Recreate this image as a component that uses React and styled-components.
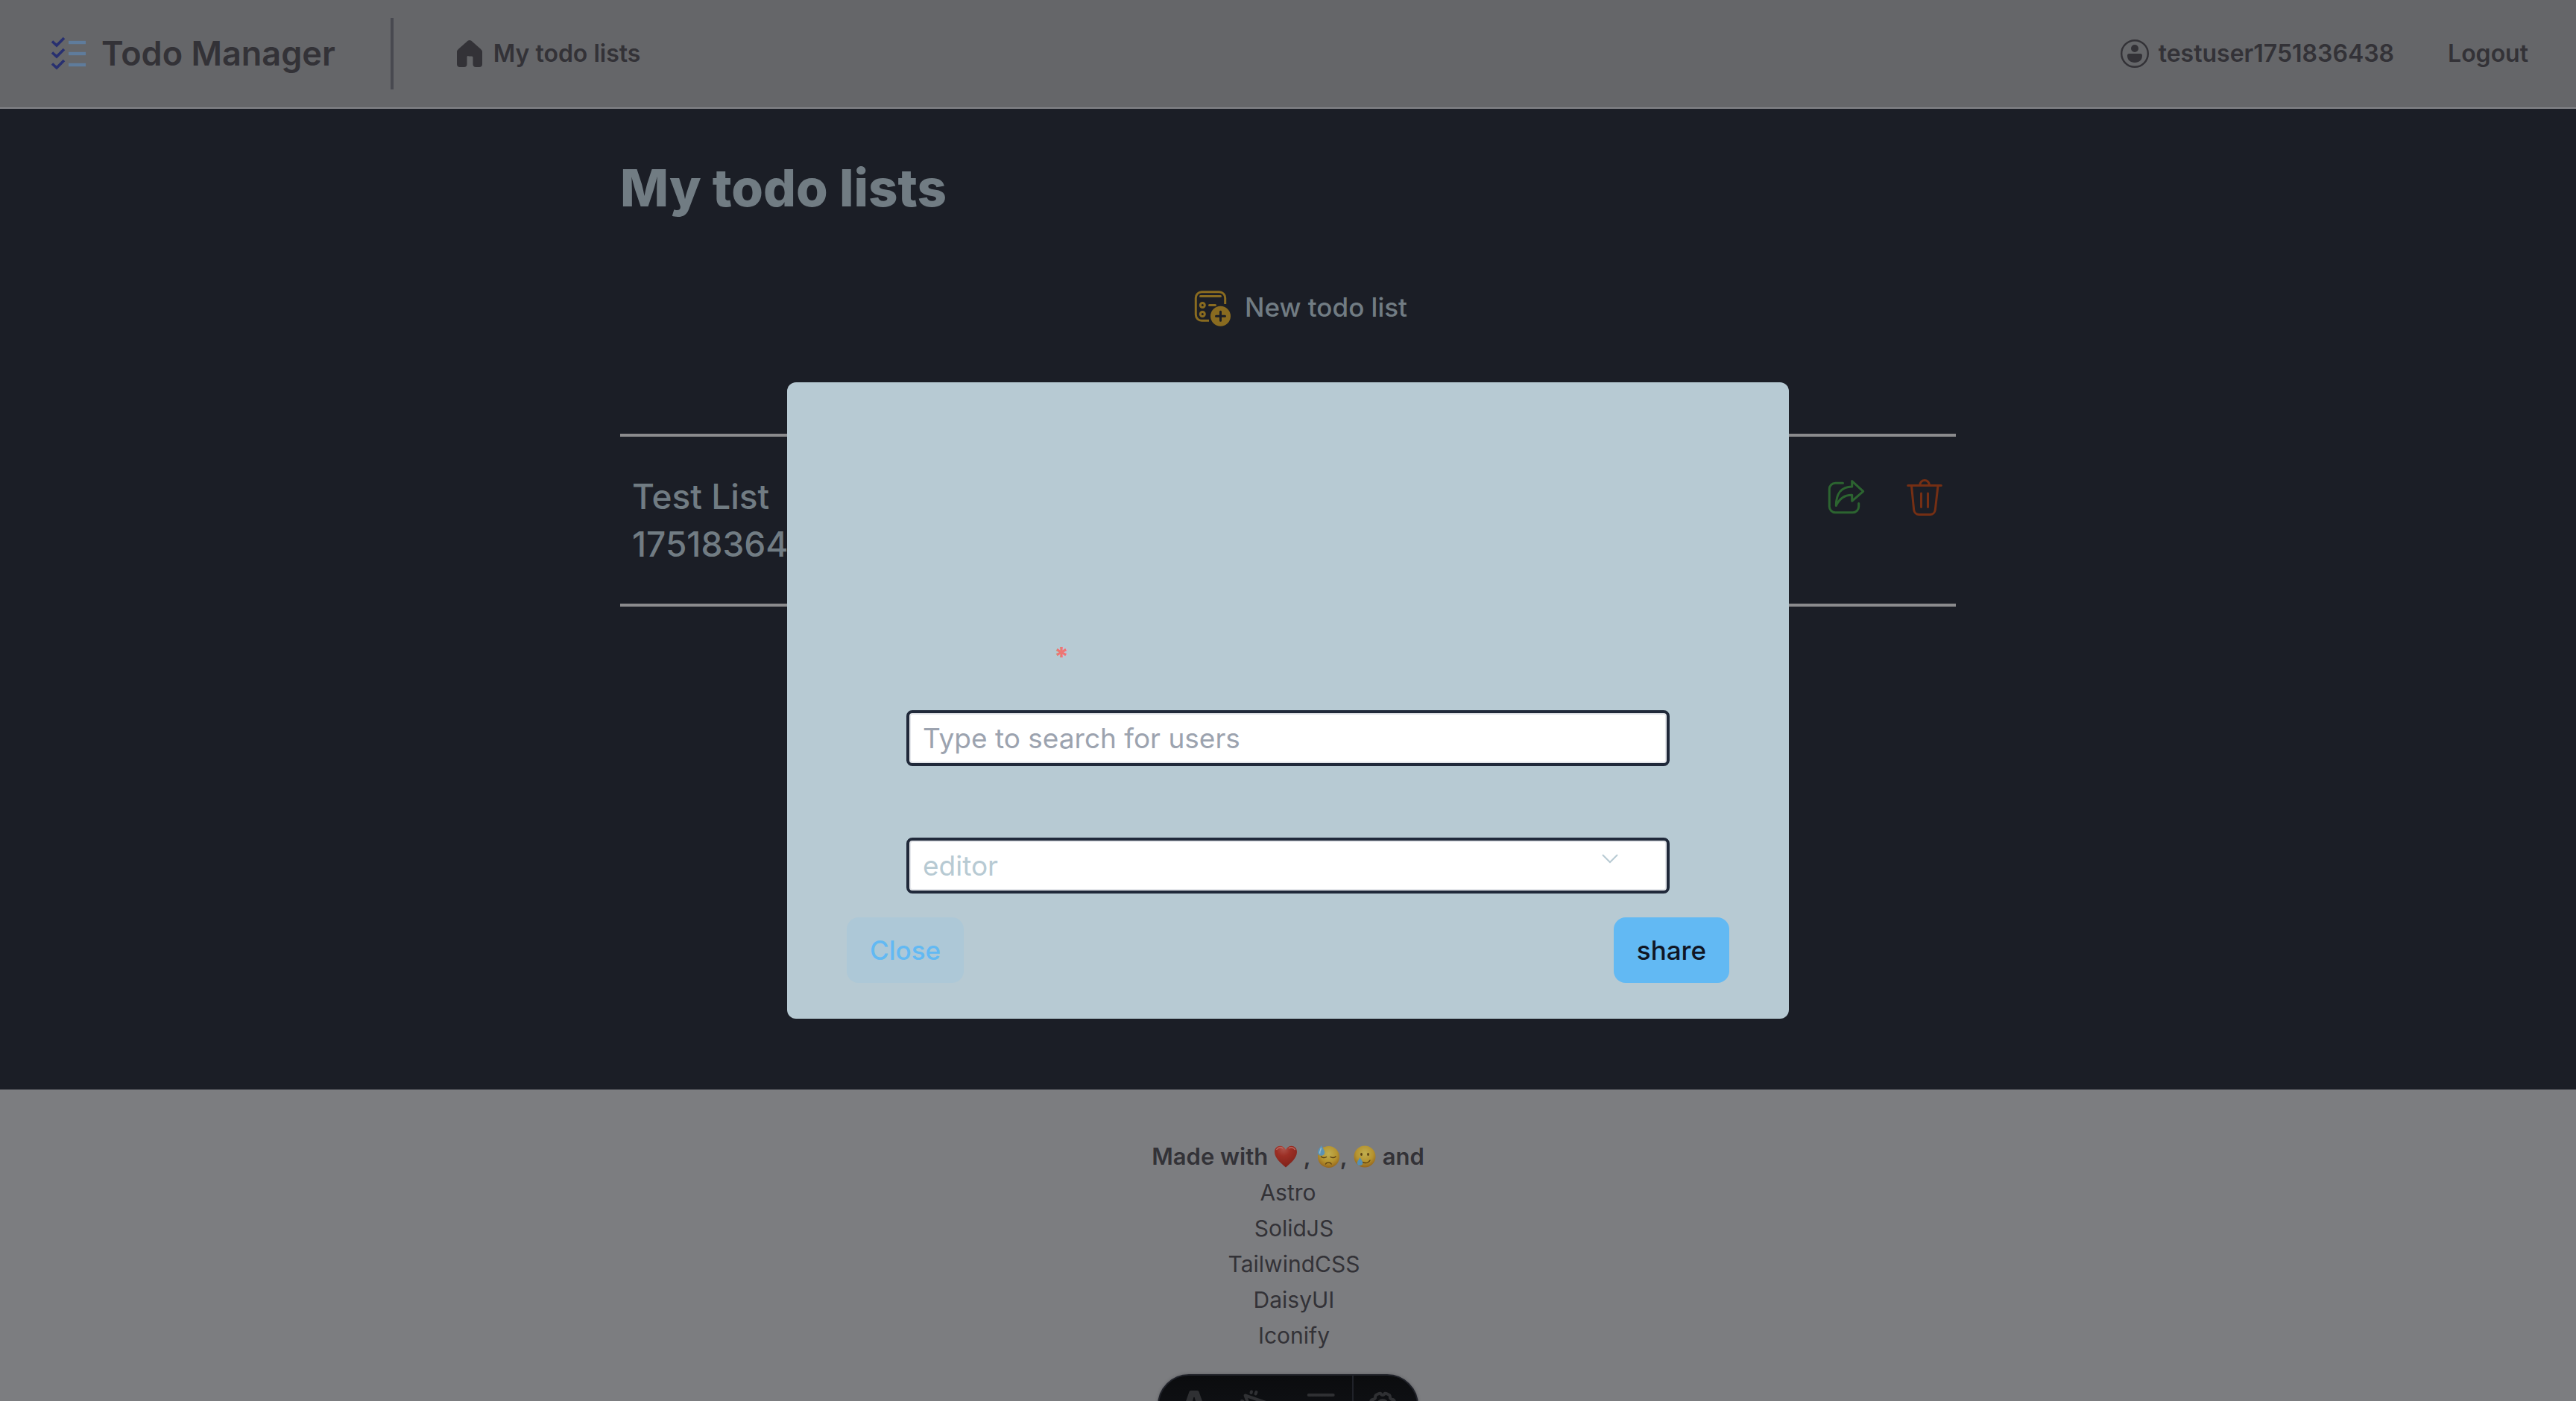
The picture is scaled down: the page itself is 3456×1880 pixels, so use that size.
import React from "react";
import styled, { createGlobalStyle } from "styled-components";

const GlobalStyle = createGlobalStyle`
  *, *::before, *::after { box-sizing: border-box; }
  html { background: #1b1e26; }
  body {
    margin: 0;
    overflow: hidden;
    font-family: Inter, "Liberation Sans", sans-serif;
    font-size: 32px;
    line-height: 48px;
    color: #333237;
  }
  h1, h2, p, ul { margin: 0; padding: 0; }
  ul { list-style: none; }
  a { color: inherit; text-decoration: none; }
  button { font: inherit; color: inherit; background: none; border: 0; padding: 0; cursor: pointer; }
  svg { display: block; flex: none; }
`;

/* ---------- header ---------- */

const Header = styled.header`
  display: flex;
  align-items: center;
  height: 146px;
  padding: 0 64px 0 68px;
  background: #656669;
  border-bottom: 2px solid #828387;
`;

const Brand = styled.a`
  display: flex;
  align-items: center;
  gap: 18px;
  font-size: 45px;
  line-height: 64px;
  font-weight: 600;
`;

const Divider = styled.span`
  width: 4px;
  height: 96px;
  margin: 0 84px 0 74px;
  background: #484950;
`;

const NavLink = styled.a`
  display: flex;
  align-items: center;
  gap: ${(p) => p.$gap || 12}px;
  font-weight: 600;
`;

const Account = styled.nav`
  display: flex;
  align-items: center;
  gap: 72px;
  margin-left: auto;
`;

const LogoutButton = styled.button`
  font-weight: 600;
`;

/* ---------- lists ---------- */

const Main = styled.main`
  min-height: 70vh;
  padding: 66px 64px;
  background: #1b1e26;
  color: #717c83;
`;

const Content = styled.div`
  display: flex;
  flex-direction: column;
  max-width: 1792px;
  margin: 0 auto;
`;

const Title = styled.h1`
  font-size: 69px;
  line-height: 80px;
  font-weight: 800;
`;

const NewListButton = styled.button`
  display: flex;
  align-items: center;
  align-self: center;
  gap: 16px;
  height: 88px;
  margin: 76px 0 126px;
  padding-left: 34px;
  font-size: 35px;
  font-weight: 500;
`;

const Lists = styled.ul`
  border-top: 4px solid #8b8b8d;
`;

const ListRow = styled.li`
  display: flex;
  justify-content: space-between;
  align-items: flex-start;
  padding: 48px 16px;
  border-bottom: 4px solid #8b8b8d;
`;

const ListName = styled.a`
  max-width: 360px;
  font-size: 46px;
  line-height: 64px;
  font-weight: 500;
`;

const RowActions = styled.div`
  display: flex;
  gap: 53px;
`;

const IconButton = styled.button`
  display: flex;
  align-items: center;
  height: 64px;
`;

/* ---------- footer ---------- */

const Footer = styled.footer`
  display: flex;
  flex-direction: column;
  align-items: center;
  min-height: calc(30vh - 146px);
  padding: 66px 64px 64px;
  background: #7c7d80;
`;

const MadeWith = styled.p`
  display: flex;
  align-items: center;
  font-size: 31px;
  font-weight: 600;
  white-space: pre;
`;

const Credits = styled.ul`
  font-size: 30px;
  text-align: center;
`;

const Credit = styled.li`
  & + & { padding-left: 16px; }
`;

/* ---------- floating toolbar ---------- */

const DevToolbar = styled.div`
  position: fixed;
  left: 50%;
  bottom: -48px;
  transform: translateX(-50%);
  display: flex;
  width: 350px;
  height: 84px;
  padding-left: 4px;
  border: 2px solid #202229;
  border-radius: 42px;
  background: linear-gradient(#0b0c0e, #121419);
  box-shadow: 0 0 4px rgba(0, 0, 0, 0.25);
`;

const ToolButton = styled.button`
  display: grid;
  place-items: center;
  width: ${(p) => p.$width || 85}px;
`;

const ToolDivider = styled.span`
  width: 2px;
  background: #202229;
`;

/* ---------- share dialog ---------- */

const Overlay = styled.div`
  position: fixed;
  inset: 0;
  display: grid;
  place-items: center;
`;

const Modal = styled.form`
  display: flex;
  flex-direction: column;
  width: 1344px;
  padding: 344px 80px 48px;
  border-radius: 12px;
  background: #b7cad3;
`;

const Field = styled.div`
  position: relative;
  display: flex;
  flex-direction: column;
  margin: 0 80px;
  padding-top: ${(p) => (p.$spaced ? 96 : 0)}px;
`;

const Label = styled.label`
  height: 96px;
  padding-left: 198px;
  color: #ed7673;
  font-size: 35px;
  font-weight: 800;
`;

const controlStyles = `
  width: 100%;
  height: 75px;
  padding: 0 18px;
  border: 4px solid #20293a;
  border-radius: 8px;
  box-shadow: inset 0 0 0 2px #e5e7eb;
  background: #fff;
  font-family: inherit;
  font-size: 37px;
  line-height: 56px;
  outline: 0;
`;

const Input = styled.input`
  ${controlStyles}
  &::placeholder { color: #9ca3af; opacity: 1; }
`;

const Select = styled.select`
  ${controlStyles}
  appearance: none;
  color: #b7cad3;
`;

const SelectArrow = styled.svg`
  position: absolute;
  right: 69px;
  bottom: 40px;
  pointer-events: none;
`;

const Actions = styled.div`
  display: flex;
  justify-content: space-between;
  margin-top: 32px;
`;

const Button = styled.button`
  height: 88px;
  padding: 0 31px;
  border-radius: 16px;
  font-size: 35px;
  font-weight: 500;
  color: ${(p) => (p.$primary ? "#101624" : "#62b9f3")};
  background: ${(p) => (p.$primary ? "#62b9f3" : "#adc8d7")};
`;

/* ---------- icons ---------- */

const ChecklistIcon = () => (
  <svg width="50" height="50" viewBox="0 0 50 50" fill="none">
    {[0, 15, 30].map((y) => (
      <g key={y} transform={`translate(0 ${y})`}>
        <path d="M2 8.500 8 14 18 4" stroke="#283070" strokeWidth="3.6" />
        <path d="M24 10h23" stroke="#5f7c9c" strokeWidth="4.4" />
      </g>
    ))}
  </svg>
);

const HomeIcon = () => (
  <svg width="36" height="38" viewBox="0 0 36 38" fill="#333237">
    <path d="M15.6 1.8a4 4 0 0 1 4.8 0l12.2 10.6A6 6 0 0 1 35 17v16a4 4 0 0 1-4 4h-4.500a4 4 0 0 1-4-4v-9a1.500 1.500 0 0 0-1.500-1.500h-4A1.500 1.500 0 0 0 14.500 24v9a4 4 0 0 1-4 4H5a4 4 0 0 1-4-4V17a6 6 0 0 1 2.400-4.600z" />
  </svg>
);

const UserIcon = () => (
  <svg width="40" height="40" viewBox="0 0 40 40" fill="#333237">
    <circle cx="20" cy="20" r="17.800" fill="none" stroke="#333237" strokeWidth="2.400" />
    <circle cx="20" cy="13" r="5" />
    <path d="M12.500 20h15a2.500 2.500 0 0 1 2.500 2.500C30 28.500 26 32 20 32s-10-3.500-10-9.500a2.500 2.500 0 0 1 2.500-2.500z" />
  </svg>
);

const NewListIcon = () => (
  <svg width="52" height="52" viewBox="0 -3 52 52" overflow="visible" fill="none" stroke="#896b20" strokeWidth="3" strokeLinecap="round">
    <path d="M20 41.300h-9.700a8 8 0 0 1-8-8V10.700a8 8 0 0 1 8-8h23.400a8 8 0 0 1 8 8V19" strokeLinecap="butt" />
    <path d="M8.500 8.500h27M20.500 20.500h8" />
    <circle cx="11.300" cy="20.500" r="3" />
    <circle cx="11.300" cy="32.500" r="3" />
    <circle cx="35.500" cy="35.300" r="13.500" fill="#896b20" stroke="none" />
    <path d="M35.500 29.300v12M29.500 35.300h12" stroke="#1b1e26" />
  </svg>
);

const ShareIcon = () => (
  <svg width="52" height="52" viewBox="0 0 52 52" fill="none" stroke="#2c6430" strokeWidth="3" strokeLinecap="round" strokeLinejoin="round">
    <path d="M21.500 8.300H11.300a8 8 0 0 0-8 8v23.400a8 8 0 0 0 8 8h23.400a8 8 0 0 0 8-8v-4.200" />
    <path d="M33.700 5.600v7.400C19 13 12.300 23 12.300 38.500 17 29 25 24 33.700 24.300v8L48.700 19.300z" />
  </svg>
);

const TrashIcon = () => (
  <svg width="52" height="52" viewBox="0 0 52 52" fill="none" stroke="#752f14" strokeWidth="3" strokeLinecap="round">
    <path d="M3.700 11.500h44.600M19.800 11a6.300 6.500 0 0 1 12.600 0M21.500 22v18.500M30.500 22v18.500" />
    <path d="M8.500 12l3.200 32.200A7 7 0 0 0 18.500 50.500h15a7 7 0 0 0 6.800-6.300L44 12" />
  </svg>
);

const HeartEmoji = () => (
  <svg width="32" height="32" viewBox="0 0 32 32" role="img" aria-label="heart">
    <defs>
      <radialGradient id="heart" cx="0.4" cy="0.15" r="0.9">
        <stop offset="0" stopColor="#ad5148" />
        <stop offset="0.35" stopColor="#9c2f25" />
        <stop offset="1" stopColor="#7c2018" />
      </radialGradient>
    </defs>
    <path d="M16 30.500C9 24.500 1 18 1 9.800 1 5 4.400 1.800 8.400 1.800c3.400 0 6.200 2 7.600 5.300 1.400-3.300 4.200-5.300 7.600-5.300 4 0 7.400 3.200 7.400 8 0 8.200-8 14.700-15 20.700z" fill="url(#heart)" />
    <path d="M3.500 7c1.400-3.200 5.500-4.400 8.500-2M20 5c3-2.400 7.100-1.200 8.500 2" stroke="#c08079" strokeWidth="1.500" fill="none" opacity="0.7" />
  </svg>
);

const FaceGradient = ({ id }) => (
  <defs>
    <radialGradient id={id} cx="0.5" cy="0.35" r="0.65">
      <stop offset="0" stopColor="#c0ae50" />
      <stop offset="0.6" stopColor="#b5932f" />
      <stop offset="1" stopColor="#96661c" />
    </radialGradient>
  </defs>
);

const SweatEmoji = () => (
  <svg width="32" height="32" viewBox="0 0 32 32" role="img" aria-label="downcast face with sweat">
    <FaceGradient id="sweat" />
    <circle cx="16.500" cy="16.500" r="14.500" fill="url(#sweat)" />
    <path d="M6.500 16c1.800 1.700 5 2 7 .5M19 16.500c2 1.500 5.200 1.200 7-.5M12.500 26c1.500-2.800 6.200-2.800 7.700 0" stroke="#5a4014" strokeWidth="1.400" fill="none" strokeLinecap="round" />
    <path d="M6.500 1c2 3.500 5 6.500 4.700 10a4.700 4.700 0 0 1-9.300-.6C1.900 7 5 4.500 6.500 1z" fill="#5b93b5" />
    <path d="M6.300 5c-.3 2.500-2 4-1.600 6.500" stroke="#9bbccc" strokeWidth="1.500" fill="none" strokeLinecap="round" />
  </svg>
);

const TearEmoji = () => (
  <svg width="32" height="32" viewBox="0 0 32 32" role="img" aria-label="smiling face with tear">
    <FaceGradient id="tear" />
    <circle cx="16" cy="16" r="14.500" fill="url(#tear)" />
    <ellipse cx="11.500" cy="13" rx="1.400" ry="2.100" fill="#5a4014" />
    <ellipse cx="20.500" cy="13" rx="1.400" ry="2.100" fill="#5a4014" />
    <path d="M13 23.500c4 1.600 8 .8 10-2.500" stroke="#5a4014" strokeWidth="1.400" fill="none" strokeLinecap="round" />
    <path d="M9.500 17c1.500 3 4 5 3.800 8a3.800 3.800 0 0 1-7.500-.3c0-3 2.700-4.700 3.700-7.700z" fill="#5590b5" />
  </svg>
);

const ToolIcon = ({ children }) => (
  <svg width="40" height="40" viewBox="0 0 40 40" fill="none" stroke="#2f3033" strokeWidth="4" strokeLinecap="round" strokeLinejoin="round" overflow="visible">
    {children}
  </svg>
);

export default function App() {
  return (
    <>
      <GlobalStyle />
      <Header>
        <Brand href="#">
          <ChecklistIcon />
          Todo Manager
        </Brand>
        <Divider />
        <NavLink href="#" $gap={14}>
          <HomeIcon />
          My todo lists
        </NavLink>
        <Account>
          <NavLink href="#">
            <UserIcon />
            testuser1751836438
          </NavLink>
          <LogoutButton type="button">Logout</LogoutButton>
        </Account>
      </Header>

      <Main>
        <Content>
          <Title>My todo lists</Title>
          <NewListButton type="button">
            <NewListIcon />
            New todo list
          </NewListButton>
          <Lists>
            <ListRow>
              <ListName href="#">Test List 1751836438</ListName>
              <RowActions>
                <IconButton type="button" aria-label="Share list">
                  <ShareIcon />
                </IconButton>
                <IconButton type="button" aria-label="Delete list">
                  <TrashIcon />
                </IconButton>
              </RowActions>
            </ListRow>
          </Lists>
        </Content>
      </Main>

      <Footer>
        <MadeWith>
          {"Made with "}
          <HeartEmoji />
          {" , "}
          <SweatEmoji />
          {", "}
          <TearEmoji />
          {" and"}
        </MadeWith>
        <Credits>
          <Credit>Astro</Credit>
          <Credit>SolidJS</Credit>
          <Credit>TailwindCSS</Credit>
          <Credit>DaisyUI</Credit>
          <Credit>Iconify</Credit>
        </Credits>
      </Footer>

      <DevToolbar>
        <ToolButton type="button" aria-label="Menu">
          <ToolIcon>
            <path d="M15.500 0h9q1.500 0 2 1.500L38 34q-6-3-12-4L20.800 9.500q-.8-1.500-1.600 0L14 30q-6 1-12 4L13.500 1.500q.5-1.500 2-1.500z" fill="#2f3033" stroke="none" />
          </ToolIcon>
        </ToolButton>
        <ToolButton type="button" aria-label="Inspect">
          <ToolIcon>
            <path d="M3.500 6.500 34 17 20 22 15 36zM12 1.500l-.5 1.500M18.500 2l-1 2.500M-1 14l1.500.5" />
          </ToolIcon>
        </ToolButton>
        <ToolButton type="button" aria-label="Audit">
          <ToolIcon>
            <path d="M3.700 6h33M3.700 20h18M3.700 34h14M26 20l5-4 5 4v7l-5 6-5-6z" />
          </ToolIcon>
        </ToolButton>
        <ToolDivider />
        <ToolButton type="button" aria-label="Settings" $width={77}>
          <ToolIcon>
            <path d="M15 4q2-1 3 1 2 2 4 0 1-2 3-1l4 2q1 1 1 4 1 2 4 2 2 1 2 4v6q0 3-2 4-3 0-4 2 0 3-1 4l-4 2q-2 1-3-1-2-2-4 0-1 2-3 1l-4-2q-1-1-1-4-1-2-4-2-2-1-2-4v-6q0-3 2-4 3 0 4-2 0-3 1-4z" />
            <circle cx="20" cy="19" r="6" />
          </ToolIcon>
        </ToolButton>
      </DevToolbar>

      <Overlay>
        <Modal role="dialog" aria-modal="true" onSubmit={(e) => e.preventDefault()}>
          <Field>
            <Label htmlFor="share-user">*</Label>
            <Input id="share-user" type="text" aria-label="User" placeholder="Type to search for users" />
          </Field>
          <Field $spaced>
            <Select aria-label="Role" defaultValue="editor">
              <option value="editor">editor</option>
            </Select>
            <SelectArrow width="22" height="14" viewBox="0 0 22 14" fill="none" stroke="#b7cad3" strokeWidth="2">
              <path d="M1 2l10 10L21 2" />
            </SelectArrow>
          </Field>
          <Actions>
            <Button type="button">Close</Button>
            <Button type="submit" $primary>share</Button>
          </Actions>
        </Modal>
      </Overlay>
    </>
  );
}
